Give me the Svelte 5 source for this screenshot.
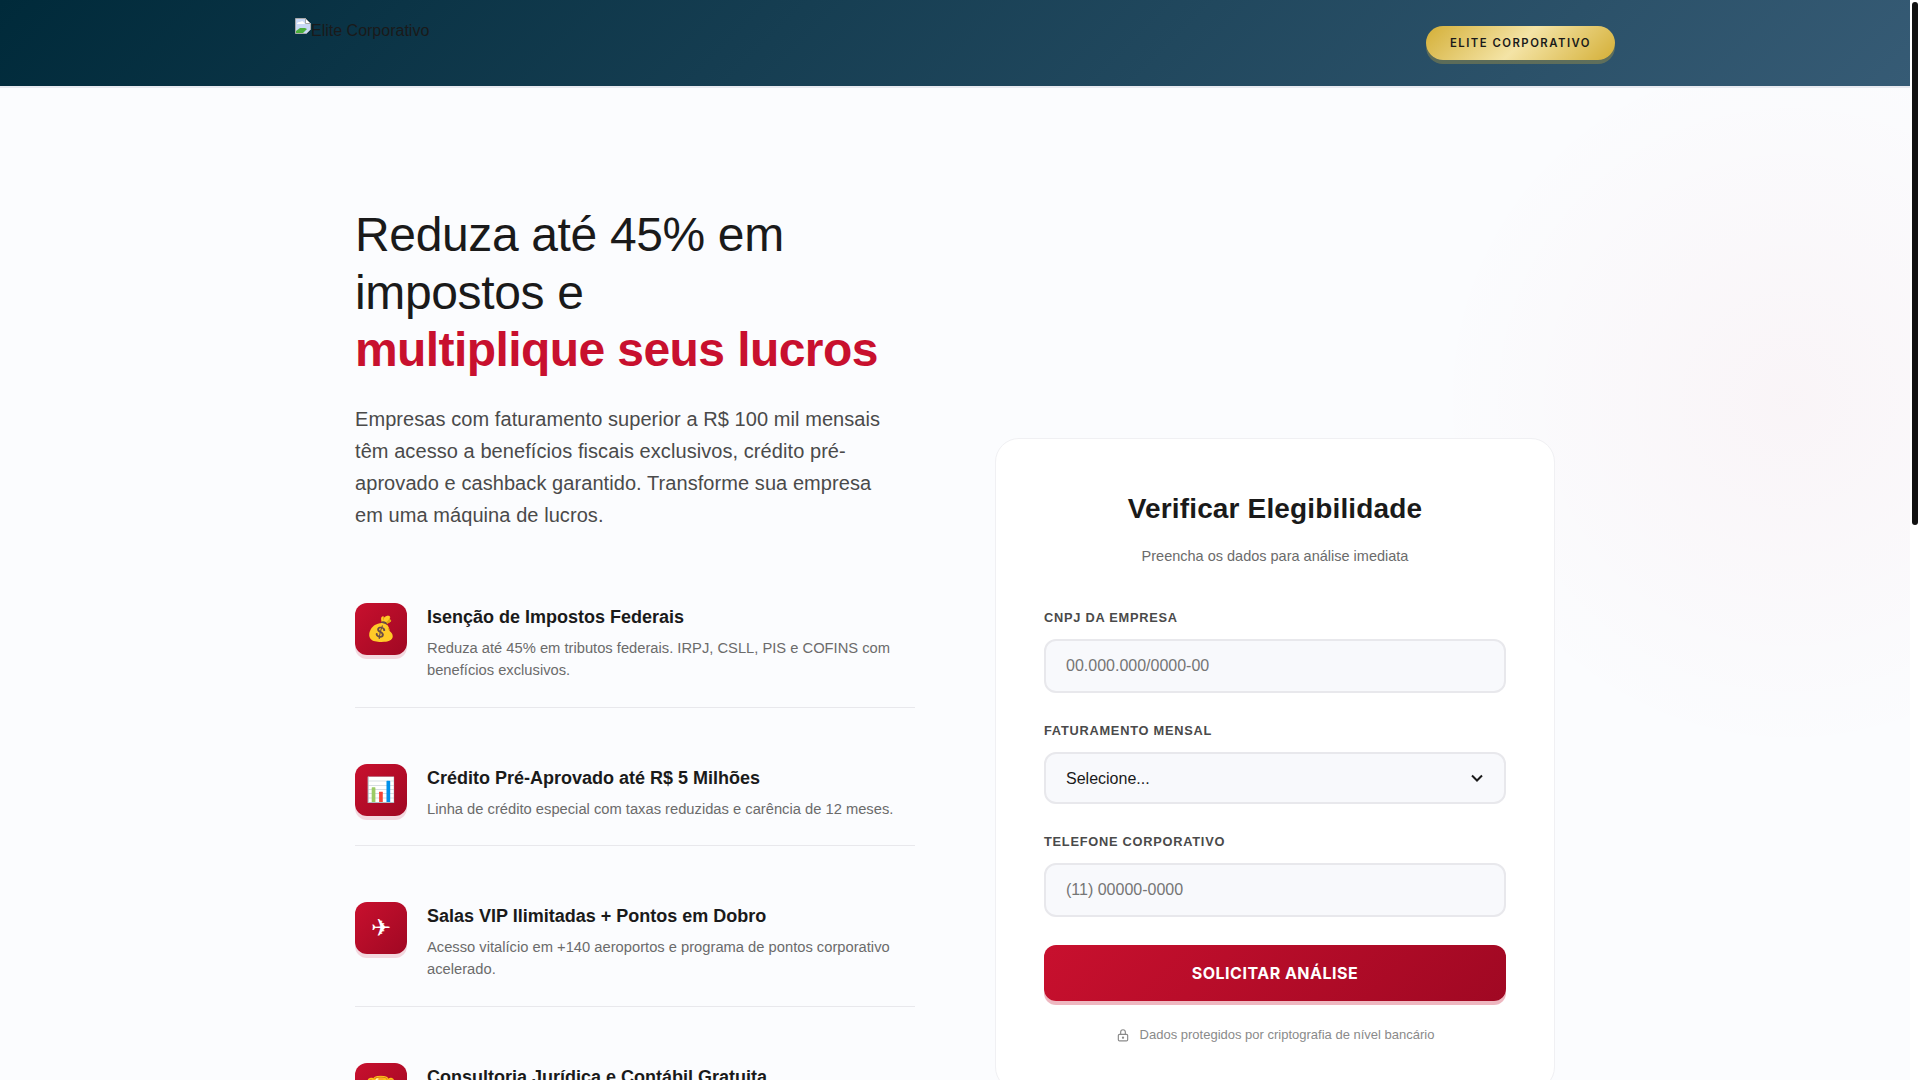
<script>
  const features = [
    { icon: '💰', title: 'Isenção de Impostos Federais', text: 'Reduza até 45% em tributos federais. IRPJ, CSLL, PIS e COFINS com benefícios exclusivos.' },
    { icon: '📊', title: 'Crédito Pré-Aprovado até R$ 5 Milhões', text: 'Linha de crédito especial com taxas reduzidas e carência de 12 meses.' },
    { icon: '✈', title: 'Salas VIP Ilimitadas + Pontos em Dobro', text: 'Acesso vitalício em +140 aeroportos e programa de pontos corporativo acelerado.' },
    { icon: '🏆', title: 'Consultoria Jurídica e Contábil Gratuita', text: 'Equipe especializada para otimizar a estrutura fiscal da sua empresa.' }
  ];
</script>

<header class="topbar">
  <div class="topbar-inner">
    <a class="logo" href="#top">
      <svg class="broken" width="16" height="16" viewBox="0 0 16 16">
        <path d="M.5.5h10l5 5v6l-4 4H.5z" fill="#c9d8f6" stroke="#a8a8a8"/>
        <path d="M10.5.5v5h5z" fill="#fff" stroke="#a8a8a8"/>
        <path d="M2 6c0-2 2-2 3-2 1-1 4-1 4 1 1 0 1 1 1 1z" fill="#fff"/>
        <path d="M1 15v-2l4-3h5l2 1-4 4z" fill="#4caf3c"/>
      </svg><span>Elite Corporativo</span>
    </a>
    <button class="badge">ELITE CORPORATIVO</button>
  </div>
</header>

<main class="hero">
  <section class="pitch">
    <h1>Reduza até 45% em impostos e <strong>multiplique seus lucros</strong></h1>
    <p class="lead">Empresas com faturamento superior a R$ 100 mil mensais têm acesso a benefícios fiscais exclusivos, crédito pré-aprovado e cashback garantido. Transforme sua empresa em uma máquina de lucros.</p>
    <ul class="features">
      {#each features as f}
        <li>
          <div class="icon">{f.icon}</div>
          <div>
            <h3>{f.title}</h3>
            <p>{f.text}</p>
          </div>
        </li>
      {/each}
    </ul>
  </section>

  <form class="card">
    <h2>Verificar Elegibilidade</h2>
    <p class="sub">Preencha os dados para análise imediata</p>
    <label for="cnpj">CNPJ da Empresa</label>
    <input id="cnpj" placeholder="00.000.000/0000-00" />
    <label for="fat">Faturamento Mensal</label>
    <select id="fat">
      <option>Selecione...</option>
      <option>R$ 100 mil a R$ 500 mil</option>
      <option>Acima de R$ 500 mil</option>
    </select>
    <label for="tel">Telefone Corporativo</label>
    <input id="tel" placeholder="(11) 00000-0000" />
    <button type="button" class="submit">SOLICITAR ANÁLISE</button>
    <p class="secure">
      <svg width="14" height="14" viewBox="0 0 24 24" fill="none" stroke="#8a8a8a" stroke-width="2"><rect x="4" y="11" width="16" height="11" rx="2"/><path d="M8 11V7a4 4 0 0 1 8 0v4"/><circle cx="12" cy="16.5" r="1" fill="#8a8a8a"/></svg>
      Dados protegidos por criptografia de nível bancário
    </p>
  </form>
</main>

<div class="scrollbar" aria-hidden="true"><div class="thumb"></div></div>

<style>
  :global(body) {
    margin: 0;
    padding-right: 10px;
    font-family: "Liberation Sans", Arial, sans-serif;
    color: #1a1a1a;
    background:
      radial-gradient(circle at 1790px 400px, rgba(200, 16, 46, 0.03), rgba(200, 16, 46, 0) 360px),
      #fbfcfe;
    background-repeat: no-repeat;
  }

  /* the browser hides its own bar, so it is drawn over the page edge */
  .scrollbar {
    position: fixed;
    top: 0;
    right: 0;
    bottom: 0;
    width: 10px;
    background: #fff;
  }
  .thumb {
    width: 6px;
    height: 523px;
    margin: 2px 0 0 2px;
    background: #111;
    border-radius: 3px;
  }

  .topbar {
    height: 86px;
    background: linear-gradient(135deg, #002a3a 0%, #365b75 100%);
    border-bottom: 2px solid #e8eaf0;
  }
  .topbar-inner {
    max-width: 1320px;
    height: 100%;
    margin: 0 auto;
    display: flex;
    align-items: center;
    justify-content: space-between;
  }
  .logo {
    align-self: flex-start;
    margin-top: 18px;
    display: flex;
    color: #1a1a1a;
    text-decoration: none;
    font-size: 16px;
    line-height: 26px;
  }
  .badge {
    height: 34px;
    padding: 0 24px;
    border: 0;
    border-radius: 50px;
    font: 600 11.3px Inter, sans-serif;
    letter-spacing: 1.5px;
    color: #1a1a1a;
    background: linear-gradient(135deg, #d4af37 0%, #f4e4a6 50%, #d4af37 100%);
    box-shadow: 0 4px 0 rgba(212, 175, 55, 0.3);
  }

  .hero {
    max-width: 1200px;
    margin: 0 auto;
    padding-top: 118px;
    display: grid;
    grid-template-columns: 1fr 1fr;
    gap: 80px;
    align-items: start;
  }

  h1 {
    margin: 0 0 24px;
    font-size: 48px;
    font-weight: 400;
    line-height: 1.2;
    letter-spacing: -0.36px;
  }
  h1 strong { display: block; color: #c8102e; letter-spacing: -0.58px; }
  .lead {
    margin: 0 0 72px;
    max-width: 540px;
    font-size: 20px;
    line-height: 1.6;
    letter-spacing: 0.07px;
    color: #4a4a4a;
  }
  .features { list-style: none; margin: 0; padding: 0; }
  .features li {
    display: flex;
    gap: 20px;
    padding-bottom: 25px;
    margin-bottom: 56px;
    border-bottom: 1px solid #e8e8ec;
  }
  .icon {
    flex: 0 0 52px;
    height: 52px;
    display: flex;
    align-items: center;
    justify-content: center;
    border-radius: 12px;
    font-size: 24px;
    color: #fff;
    background: linear-gradient(135deg, #c8102e, #a00823);
    box-shadow: 0 4px 0 rgba(200, 16, 46, 0.15);
  }
  h3 { margin: 3px 0 8px; font-size: 18px; line-height: 23px; font-weight: 700; }
  .features p { margin: 0; font-size: 14.72px; line-height: 22.4px; color: #6b6b6b; }

  .card {
    box-sizing: border-box;
    margin-top: 232px;
    padding: 48px;
    background: #fff;
    border: 1px solid #f0f0f3;
    border-radius: 24px;
    display: flex;
    flex-direction: column;
  }
  h2 { margin: 0 0 14px; font-size: 28px; line-height: 44px; letter-spacing: 0.15px; text-align: center; }
  .sub { margin: 0 0 41px; font-size: 14.5px; line-height: 22px; color: #6b6b6b; text-align: center; }
  label {
    margin: 2px 0 13px;
    font-size: 12.8px;
    line-height: 16px;
    font-weight: 700;
    letter-spacing: 0.75px;
    text-transform: uppercase;
    color: #4a4a4a;
  }
  input, select {
    box-sizing: border-box;
    height: 54px;
    margin-bottom: 28px;
    padding: 0 20px;
    border: 2px solid #e8e8ec;
    border-radius: 12px;
    background-color: #f8f9fc;
    font: 16px "Liberation Sans", Arial, sans-serif;
    color: #1a1a1a;
  }
  input::placeholder { color: #757575; }
  select {
    height: 52px;
    appearance: none;
    background-image: url("data:image/svg+xml,%3Csvg xmlns='http://www.w3.org/2000/svg' width='14' height='9' viewBox='0 0 14 9' fill='none' stroke='%231a1a1a' stroke-width='2'%3E%3Cpath d='M2 1.5l5 5 5-5'/%3E%3C/svg%3E");
    background-repeat: no-repeat;
    background-position: right 20px center;
  }
  .submit {
    height: 56px;
    border: 0;
    border-radius: 12px;
    font: 700 16px Inter, sans-serif;
    letter-spacing: 0.5px;
    color: #fff;
    background: linear-gradient(135deg, #c8102e, #a00823);
    box-shadow: 0 4px 0 rgba(200, 16, 46, 0.3);
  }
  .secure {
    margin: 26px 0 0;
    display: flex;
    align-items: center;
    justify-content: center;
    gap: 10px;
    font-size: 13px;
    line-height: 15px;
    color: #8a8a8a;
  }
</style>
